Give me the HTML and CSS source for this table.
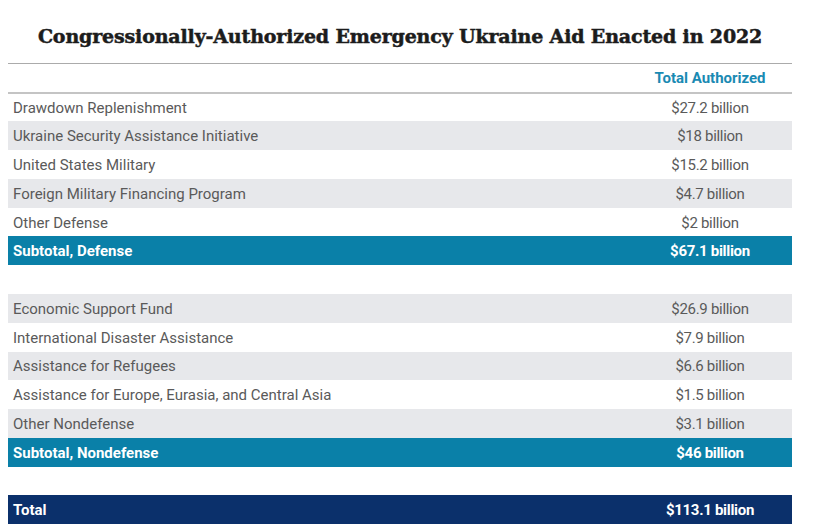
FILE: index.html
```html
<!DOCTYPE html>
<html>
<head>
<meta charset="utf-8">
<link rel="stylesheet" href="styles.css">
</head>
<body>
<div class="wrap">
  <h1 class="title">Congressionally-Authorized Emergency Ukraine Aid Enacted in 2022</h1>
  <table class="aid">
    <thead>
      <tr class="head"><th class="label"></th><th class="value">Total Authorized</th></tr>
    </thead>
    <tbody>
      <tr><td class="label">Drawdown Replenishment</td><td class="value">$27.2 billion</td></tr>
      <tr class="alt"><td class="label">Ukraine Security Assistance Initiative</td><td class="value">$18 billion</td></tr>
      <tr><td class="label">United States Military</td><td class="value">$15.2 billion</td></tr>
      <tr class="alt"><td class="label">Foreign Military Financing Program</td><td class="value">$4.7 billion</td></tr>
      <tr><td class="label">Other Defense</td><td class="value">$2 billion</td></tr>
      <tr class="sub"><td class="label">Subtotal, Defense</td><td class="value">$67.1 billion</td></tr>
      <tr class="gap"><td></td><td></td></tr>
      <tr class="alt"><td class="label">Economic Support Fund</td><td class="value">$26.9 billion</td></tr>
      <tr><td class="label">International Disaster Assistance</td><td class="value">$7.9 billion</td></tr>
      <tr class="alt"><td class="label">Assistance for Refugees</td><td class="value">$6.6 billion</td></tr>
      <tr><td class="label">Assistance for Europe, Eurasia, and Central Asia</td><td class="value">$1.5 billion</td></tr>
      <tr class="alt"><td class="label">Other Nondefense</td><td class="value">$3.1 billion</td></tr>
      <tr class="sub"><td class="label">Subtotal, Nondefense</td><td class="value">$46 billion</td></tr>
      <tr class="gap"><td></td><td></td></tr>
      <tr class="total"><td class="label">Total</td><td class="value">$113.1 billion</td></tr>
    </tbody>
  </table>
</div>
</body>
</html>
```
FILE: styles.css
```css
html, body {
  margin: 0;
  padding: 0;
  background: #ffffff;
}
body {
  padding: 8px;
  font-family: Roboto, "Liberation Sans", sans-serif;
}
.wrap {
  width: 784px;
}
.title {
  margin: 0;
  height: 55px;
  display: flex;
  align-items: center;
  justify-content: center;
  font-family: "DejaVu Serif", "Liberation Serif", serif;
  font-weight: bold;
  font-size: 19px;
  letter-spacing: -0.15px;
  -webkit-text-stroke: 0.5px #1c1c1c;
  color: #1c1c1c;
  white-space: nowrap;
}
.aid {
  width: 784px;
  border-collapse: collapse;
  font-size: 15px;
  color: #5a5a5a;
}
.aid th, .aid td {
  padding: 0 5px;
  height: 28.8px;
  box-sizing: border-box;
}
.aid .label {
  text-align: left;
}
.aid .value {
  width: 164px;
  text-align: center;
  letter-spacing: -0.3px;
}
.aid .head th {
  height: 29px;
  padding-top: 1px;
  border-top: 1px solid #ababab;
  border-bottom: 2px solid #c4c4c4;
  color: #1a8ab3;
  font-weight: bold;
  font-size: 15px;
  letter-spacing: 0;
}
.aid tbody td {
  padding-top: 1px;
}
.alt td {
  background: #e7e8eb;
}
.sub td {
  background: #0a80a8;
  color: #ffffff;
  font-weight: bold;
}
.total td {
  background: #0b306b;
  color: #ffffff;
  font-weight: bold;
}
.gap td {
  height: 28.7px;
}
```
